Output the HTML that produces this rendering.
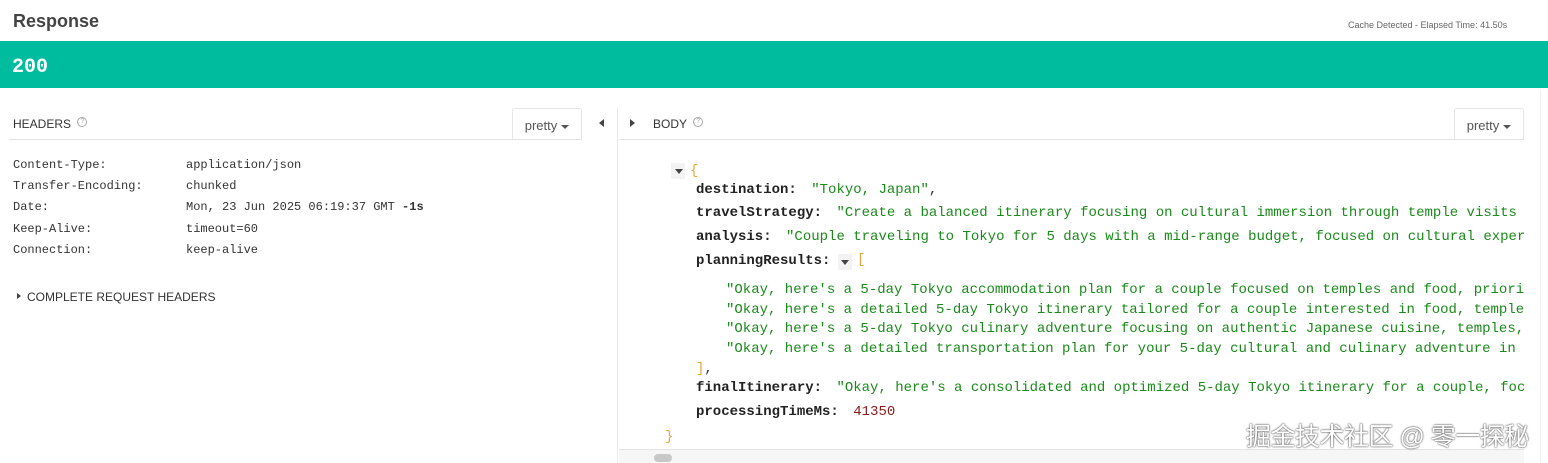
<!DOCTYPE html>
<html><head><meta charset="utf-8"><style>
*{margin:0;padding:0;box-sizing:border-box}
body{width:1548px;height:463px;overflow:hidden;background:#fff;font-family:"Liberation Sans",sans-serif;position:relative;color:#333}
.a{position:absolute;white-space:nowrap}
.m{font-family:"Liberation Mono",monospace}
.h{font-size:12px;color:#333}
.b{font-size:14px;line-height:18px}
.k{font-weight:bold;color:#222;margin-right:6px}
.s{color:#1a8a1a}
.btn{position:absolute;border:1px solid #e6e6e6;border-bottom:none;background:#fff;font-size:13px;color:#555;padding-top:9px;text-align:center;border-radius:3px 3px 0 0}
.car{display:inline-block;width:0;height:0;border-left:4px solid transparent;border-right:4px solid transparent;border-top:4px solid #555;vertical-align:middle;margin-left:4px}
.q{display:inline-block;width:10px;height:10px;border:1px solid #aaa;border-radius:50%;font-size:7px;line-height:8px;text-align:center;color:#aaa;vertical-align:top;margin-left:3px}
</style></head><body>
<div class="a" style="left:13px;top:11px;font-size:18px;font-weight:bold;color:#444">Response</div>
<div class="a" style="left:1348px;top:20px;font-size:9px;color:#666">Cache Detected - Elapsed Time: 41.50s</div>
<div class="a" style="left:0;top:41px;width:1548px;height:47px;background:#00bc9e"></div>
<div class="a m" style="left:12px;top:56px;font-size:20px;font-weight:bold;color:#fff">200</div>

<div class="a" style="left:13px;top:117px;font-size:12px;color:#333">HEADERS <span class="q">?</span></div>
<div class="btn" style="left:512px;top:108px;width:70px;height:32px">pretty<span class="car"></span></div>
<div class="a" style="left:9px;top:139px;width:573px;height:1px;background:#e3e3e3"></div>
<div class="a" style="left:599px;top:119px;width:0;height:0;border-top:4px solid transparent;border-bottom:4px solid transparent;border-right:5px solid #444"></div>
<div class="a" style="left:630px;top:119px;width:0;height:0;border-top:4px solid transparent;border-bottom:4px solid transparent;border-left:5px solid #444"></div>
<div class="a" style="left:617px;top:108px;width:1px;height:355px;background:#e8e8e8"></div>

<div class="a m h" style="left:13px;top:155px;line-height:21.2px">Content-Type:<br>Transfer-Encoding:<br>Date:<br>Keep-Alive:<br>Connection:</div>
<div class="a m h" style="left:186px;top:155px;line-height:21.2px">application/json<br>chunked<br>Mon, 23 Jun 2025 06:19:37 GMT <b>-1s</b><br>timeout=60<br>keep-alive</div>
<div class="a" style="left:17px;top:293px;width:0;height:0;border-top:3.5px solid transparent;border-bottom:3.5px solid transparent;border-left:4px solid #444"></div>
<div class="a" style="left:27px;top:290px;font-size:12px;color:#333">COMPLETE REQUEST HEADERS</div>

<div class="a" style="left:653px;top:117px;font-size:12px;color:#333">BODY <span class="q">?</span></div>
<div class="btn" style="left:1454px;top:108px;width:70px;height:32px">pretty<span class="car"></span></div>
<div class="a" style="left:619px;top:139px;width:905px;height:1px;background:#e3e3e3"></div>
<div class="a" style="left:1540px;top:90px;width:1px;height:373px;background:#eee"></div>

<div class="a" style="left:629px;top:150px;width:895px;height:300px;overflow:hidden">
<div class="a" style="left:42px;top:13px;width:14px;height:16px;background:#f3f3f3"></div>
<div class="a" style="left:46px;top:19px;border-left:4px solid transparent;border-right:4px solid transparent;border-top:5px solid #444"></div>
<div class="a m b" style="left:61px;top:12px;color:#e8a33a">{</div>
<div class="a m b" style="left:67px;top:31px"><span class="k">destination:</span> <span class="s">"Tokyo, Japan"</span>,</div>
<div class="a m b" style="left:67px;top:54px"><span class="k">travelStrategy:</span> <span class="s">"Create a balanced itinerary focusing on cultural immersion through temple visits and food experiences"</span></div>
<div class="a m b" style="left:67px;top:78px"><span class="k">analysis:</span> <span class="s">"Couple traveling to Tokyo for 5 days with a mid-range budget, focused on cultural experiences"</span></div>
<div class="a m b" style="left:67px;top:102px"><span class="k">planningResults:</span></div>
<div class="a" style="left:209px;top:104px;width:14px;height:16px;background:#f3f3f3"></div>
<div class="a" style="left:212px;top:110px;border-left:4px solid transparent;border-right:4px solid transparent;border-top:5px solid #444"></div>
<div class="a m b" style="left:228px;top:101px;color:#e8a33a">[</div>
<div class="a m b s" style="left:97px;top:131px;line-height:19.7px">"Okay, here's a 5-day Tokyo accommodation plan for a couple focused on temples and food, prioritizing"<br>"Okay, here's a detailed 5-day Tokyo itinerary tailored for a couple interested in food, temples"<br>"Okay, here's a 5-day Tokyo culinary adventure focusing on authentic Japanese cuisine, temples, and"<br>"Okay, here's a detailed transportation plan for your 5-day cultural and culinary adventure in Tokyo"</div>
<div class="a m b" style="left:67px;top:210px"><span style="color:#e8a33a">]</span>,</div>
<div class="a m b" style="left:67px;top:229px"><span class="k">finalItinerary:</span> <span class="s">"Okay, here's a consolidated and optimized 5-day Tokyo itinerary for a couple, focused"</span></div>
<div class="a m b" style="left:67px;top:253px"><span class="k">processingTimeMs:</span> <span style="color:#8b1a1a">41350</span></div>
<div class="a m b" style="left:36px;top:278px;color:#e8a33a">}</div>
</div>
<div class="a" style="left:619px;top:449px;width:905px;height:1px;background:#e3e3e3"></div>
<div class="a" style="left:619px;top:450px;width:905px;height:13px;background:#f6f6f6"></div>
<div class="a" style="left:654px;top:454px;width:18px;height:8px;border-radius:4px;background:#c8c8c8"></div>
<div class="a" style="left:1246px;top:417px;font-size:25px;letter-spacing:-0.5px;color:#fff;font-family:'Liberation Sans','Noto Sans CJK SC',sans-serif;text-shadow:0 0 2px #555,0 0 1px #333">掘金技术社区 @ 零一探秘</div>
</body></html>
